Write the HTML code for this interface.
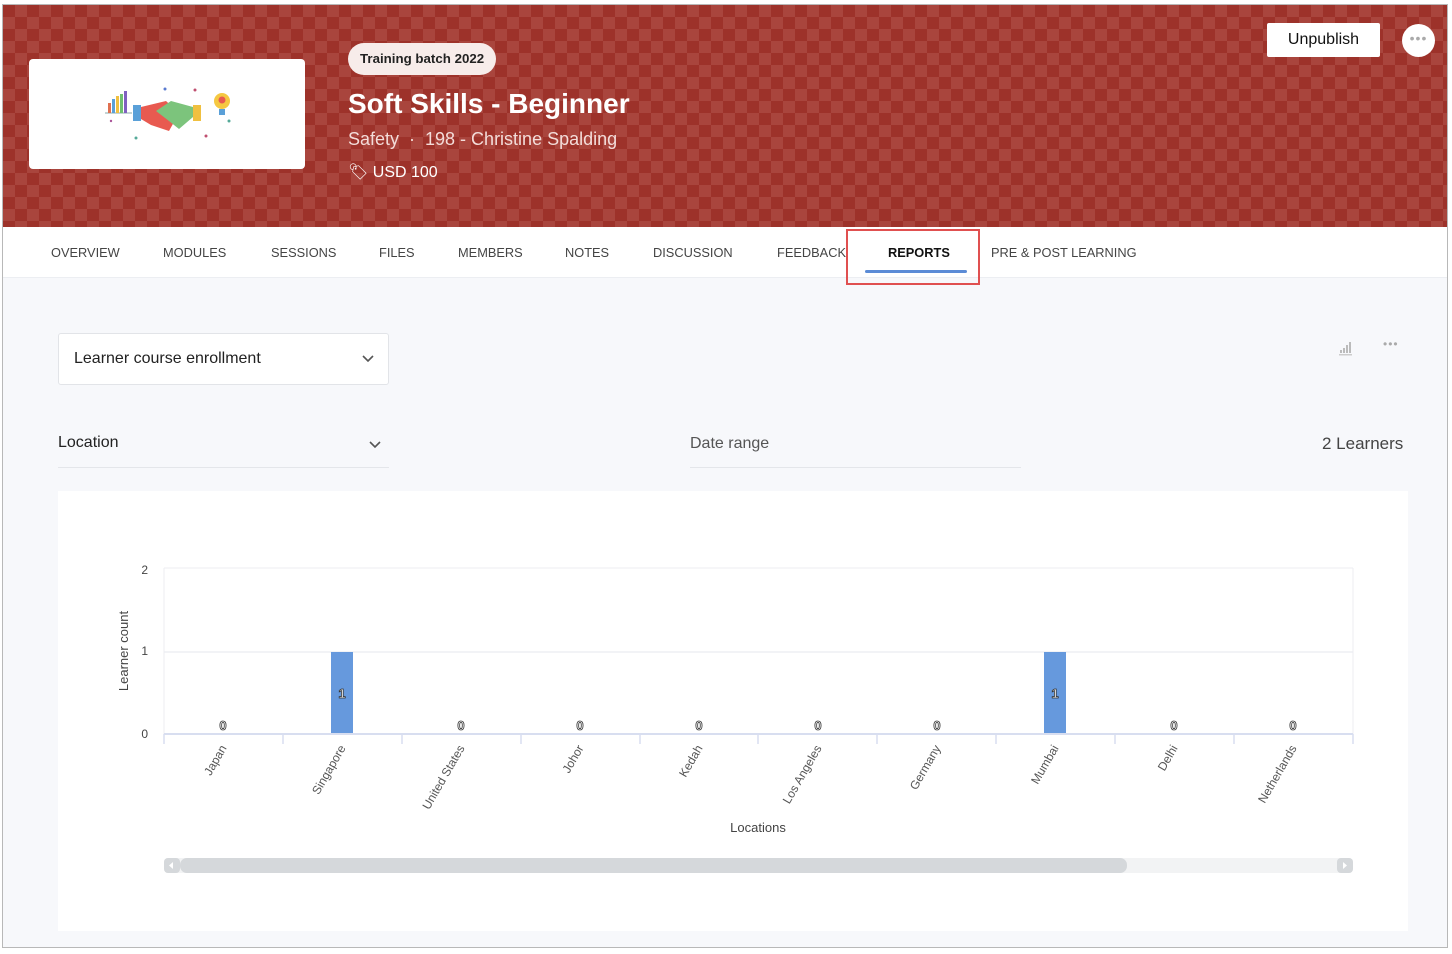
<!DOCTYPE html>
<html><head><meta charset="utf-8">
<style>
*{box-sizing:border-box;margin:0;padding:0}
body{width:1452px;height:954px;background:#fff;font-family:"Liberation Sans",sans-serif;position:relative;overflow:hidden}
.frame{position:absolute;left:2px;top:4px;width:1446px;height:944px;border:1px solid #b8b8b8;background:#f7f8fb;overflow:hidden}
.hdr{position:absolute;left:0;top:0;width:1446px;height:222px;background-color:#9d322a;
background-image:linear-gradient(45deg,#a9453d 25%,transparent 25%,transparent 75%,#a9453d 75%),linear-gradient(45deg,#a9453d 25%,transparent 25%,transparent 75%,#a9453d 75%);
background-size:24px 24px;background-position:0 0,12px 12px}
.img{position:absolute;left:26px;top:54px;width:276px;height:110px;background:#fff;border-radius:4px}
.pill{position:absolute;left:345px;top:38px;height:32px;padding:0 12px;line-height:32px;background:#f7ecea;border-radius:16px;font-size:13.3px;font-weight:bold;color:#222}
.title{position:absolute;left:345px;top:83px;color:#fff;font-size:28px;font-weight:bold}
.sub{position:absolute;left:345px;top:124px;color:#f3dcd9;font-size:18px}
.price{position:absolute;left:345px;top:157px;color:#fff;font-size:16px}
.unpub{position:absolute;left:1264px;top:18px;width:113px;height:34px;background:#fff;border-radius:2px;font-size:16px;text-align:center;line-height:34px;color:#111}
.more{position:absolute;left:1399px;top:19px;width:33px;height:33px;border-radius:50%;background:#fff;text-align:center;line-height:28px;color:#aaa;font-size:14px;letter-spacing:1px}
.tabs{position:absolute;left:0;top:222px;width:1446px;height:51px;background:#fff;border-bottom:1px solid #eceef2}
.tab{position:absolute;top:18px;font-size:12.8px;color:#444}
.sel{position:absolute;width:134px;height:56px;border:2px solid #e05050}
.uline{position:absolute;width:102px;height:3px;background:#5b8bd6;border-radius:2px}
.dd{position:absolute;left:55px;top:328px;width:331px;height:52px;border:1px solid #e2e4e8;background:#fff;border-radius:3px;font-size:16px;color:#222;padding:16px 15px}
.lab{position:absolute;font-size:16px;color:#222}
.card{position:absolute;left:55px;top:486px;width:1350px;height:440px;background:#fff}
</style></head><body>
<div class="frame">
<div class="hdr"></div>
<div class="img">
<svg width="276" height="110" viewBox="0 0 276 110">
<g transform="translate(-28,-58)">
<line x1="104" y1="112" x2="131" y2="112" stroke="#8aa" stroke-width="1"/>
<rect x="107" y="102" width="3" height="10" fill="#e07050"/><rect x="111" y="98" width="3" height="14" fill="#5aa0d8"/><rect x="115" y="95" width="3" height="17" fill="#f0c040"/><rect x="119" y="93" width="3" height="19" fill="#70c070"/><rect x="123" y="90" width="3" height="22" fill="#8060c0"/>
<rect x="132" y="104" width="8" height="16" fill="#5aa0d8"/><rect x="192" y="104" width="8" height="16" fill="#f0c040"/>
<path d="M140 106 L165 100 L178 112 L168 130 L150 124 L140 118Z" fill="#e85a50"/>
<path d="M192 106 L170 100 L155 110 L168 120 L178 128 L192 116Z" fill="#7cc47c"/>
<circle cx="221" cy="100" r="8" fill="#f5c842"/><circle cx="221" cy="99" r="3.5" fill="#e85a50"/><rect x="218" y="108" width="6" height="6" fill="#5aa0d8"/>
<circle cx="164" cy="88" r="1.5" fill="#5a7ad0"/><circle cx="194" cy="89" r="1.5" fill="#c05070"/><circle cx="135" cy="137" r="1.5" fill="#5a9"/><circle cx="205" cy="135" r="1.5" fill="#c05070"/><circle cx="228" cy="120" r="1.5" fill="#5a9"/><circle cx="110" cy="120" r="1.2" fill="#a59"/>
</g></svg></div>
<div class="pill">Training batch 2022</div>
<div class="title">Soft Skills - Beginner</div>
<div class="sub">Safety &nbsp;·&nbsp; 198 - Christine Spalding</div>
<div class="price">🏷︎ USD 100</div>
<div class="unpub">Unpublish</div>
<div class="more">•••</div>
<div class="tabs">
<span class="tab" style="left:48px">OVERVIEW</span>
<span class="tab" style="left:160px">MODULES</span>
<span class="tab" style="left:268px">SESSIONS</span>
<span class="tab" style="left:376px">FILES</span>
<span class="tab" style="left:455px">MEMBERS</span>
<span class="tab" style="left:562px">NOTES</span>
<span class="tab" style="left:650px">DISCUSSION</span>
<span class="tab" style="left:774px">FEEDBACK</span>
<span class="tab" style="left:885px;font-weight:bold;color:#111">REPORTS</span>
<span class="tab" style="left:988px">PRE &amp; POST LEARNING</span>
</div>
<div class="dd">Learner course enrollment
<svg style="position:absolute;right:14px;top:21px" width="12" height="8"><path d="M1 1 L6 6 L11 1" stroke="#555" stroke-width="1.6" fill="none"/></svg></div>
<svg style="position:absolute;left:1336px;top:335px" width="14" height="16"><rect x="1" y="10" width="2" height="3" fill="#bbb"/><rect x="4" y="8" width="2" height="5" fill="#bbb"/><rect x="7" y="5" width="2" height="8" fill="#bbb"/><rect x="10" y="2" width="2" height="11" fill="#bbb"/><rect x="0" y="14" width="13" height="1.5" fill="#ccc"/></svg>
<div style="position:absolute;left:1380px;top:332px;color:#aaa;font-size:12px;letter-spacing:1px">•••</div>
<div class="lab" style="left:55px;top:429px">Location</div>
<svg style="position:absolute;left:366px;top:436px" width="12" height="8"><path d="M1 1 L6 6 L11 1" stroke="#555" stroke-width="1.6" fill="none"/></svg>
<div style="position:absolute;left:55px;top:462px;width:331px;height:1px;background:#e4e6ea"></div>
<div class="lab" style="left:687px;top:430px;color:#555">Date range</div>
<div style="position:absolute;left:687px;top:462px;width:331px;height:1px;background:#e4e6ea"></div>
<div class="lab" style="left:1319px;top:429px;font-size:17px;color:#444">2 Learners</div>
<div class="card"></div>
<svg style="position:absolute;left:-2px;top:-4px" width="1452" height="954" font-family="Liberation Sans, sans-serif">
<line x1="163" y1="567" x2="1352" y2="567" stroke="#eceef2"/>
<line x1="163" y1="651" x2="1352" y2="651" stroke="#e4e7ee"/>
<line x1="163" y1="567" x2="163" y2="733" stroke="#eceef2"/>
<line x1="1352" y1="567" x2="1352" y2="733" stroke="#eceef2"/>
<text x="147" y="573" font-size="12" fill="#444" text-anchor="end">2</text>
<text x="147" y="654" font-size="12" fill="#444" text-anchor="end">1</text>
<text x="147" y="737" font-size="12" fill="#444" text-anchor="end">0</text>
<text transform="translate(127,650) rotate(-90)" font-size="13" fill="#444" text-anchor="middle">Learner count</text>
<rect x="330" y="651" width="22" height="82" fill="#6699dd"/>
<rect x="1043" y="651" width="22" height="82" fill="#6699dd"/>
<line x1="163" y1="733" x2="1352" y2="733" stroke="#d8def0" stroke-width="2"/>
<g stroke="#d8def0" stroke-width="1.5">
<line x1="163" y1="733" x2="163" y2="743"/><line x1="282" y1="733" x2="282" y2="743"/><line x1="401" y1="733" x2="401" y2="743"/><line x1="520" y1="733" x2="520" y2="743"/><line x1="639" y1="733" x2="639" y2="743"/><line x1="757" y1="733" x2="757" y2="743"/><line x1="876" y1="733" x2="876" y2="743"/><line x1="995" y1="733" x2="995" y2="743"/><line x1="1114" y1="733" x2="1114" y2="743"/><line x1="1233" y1="733" x2="1233" y2="743"/><line x1="1352" y1="733" x2="1352" y2="743"/>
</g>
<g font-size="13" fill="#fff" stroke="#333" stroke-width="0.8" text-anchor="middle" font-weight="bold">
<text x="222" y="729">0</text><text x="341" y="697">1</text><text x="460" y="729">0</text><text x="579" y="729">0</text><text x="698" y="729">0</text><text x="817" y="729">0</text><text x="936" y="729">0</text><text x="1054" y="697">1</text><text x="1173" y="729">0</text><text x="1292" y="729">0</text>
</g>
<g font-size="12" fill="#555" text-anchor="end">
<text transform="translate(226,747) rotate(-60)">Japan</text>
<text transform="translate(345,747) rotate(-60)">Singapore</text>
<text transform="translate(464,747) rotate(-60)">United States</text>
<text transform="translate(583,747) rotate(-60)">Johor</text>
<text transform="translate(702,747) rotate(-60)">Kedah</text>
<text transform="translate(821,747) rotate(-60)">Los Angeles</text>
<text transform="translate(940,747) rotate(-60)">Germany</text>
<text transform="translate(1058,747) rotate(-60)">Mumbai</text>
<text transform="translate(1177,747) rotate(-60)">Delhi</text>
<text transform="translate(1296,747) rotate(-60)">Netherlands</text>
</g>
<text x="757" y="831" font-size="13" fill="#444" text-anchor="middle">Locations</text>
<rect x="163" y="857" width="1189" height="15" rx="4" fill="#f2f3f4"/>
<rect x="163" y="857" width="16" height="15" rx="4" fill="#d5d8db"/>
<rect x="179" y="857" width="947" height="15" rx="7" fill="#d5d8db"/>
<rect x="1336" y="857" width="16" height="15" rx="4" fill="#d5d8db"/>
<path d="M172 861 L168 864.5 L172 868Z" fill="#fff"/><path d="M1342 861 L1346 864.5 L1342 868Z" fill="#fff"/>
</svg>
<div class="sel" style="left:843px;top:224px"></div>
<div class="uline" style="left:862px;top:265px"></div>
</div>
</body></html>
